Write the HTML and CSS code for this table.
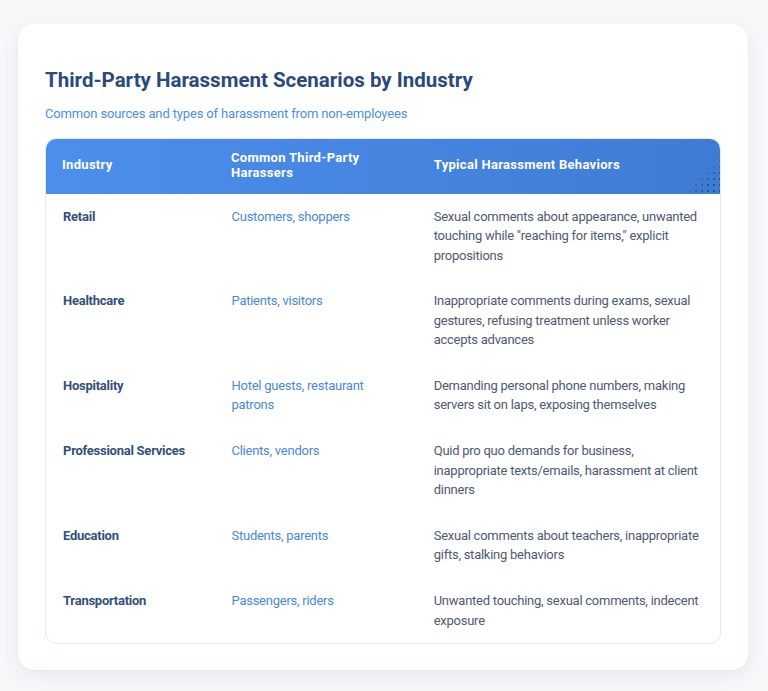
FILE: index.html
```html
<!DOCTYPE html>
<html lang="en">
<head>
<meta charset="utf-8">
<title>Third-Party Harassment Scenarios by Industry</title>
<link rel="stylesheet" href="styles.css">
</head>
<body>
<div class="card">
  <h1 class="title">Third-Party Harassment Scenarios by Industry</h1>
  <p class="subtitle">Common sources and types of harassment from non-employees</p>
  <div class="table">
    <div class="row head">
      <div class="cell">Industry</div>
      <div class="cell">Common Third-Party Harassers</div>
      <div class="cell">Typical Harassment Behaviors</div>
      <span class="dots"></span>
    </div>
    <div class="row">
      <div class="cell ind">Retail</div>
      <div class="cell who">Customers, shoppers</div>
      <div class="cell what">Sexual comments about appearance, unwanted touching while "reaching for items," explicit propositions</div>
    </div>
    <div class="row">
      <div class="cell ind">Healthcare</div>
      <div class="cell who">Patients, visitors</div>
      <div class="cell what">Inappropriate comments during exams, sexual gestures, refusing treatment unless worker accepts advances</div>
    </div>
    <div class="row">
      <div class="cell ind">Hospitality</div>
      <div class="cell who">Hotel guests, restaurant patrons</div>
      <div class="cell what">Demanding personal phone numbers, making servers sit on laps, exposing themselves</div>
    </div>
    <div class="row">
      <div class="cell ind">Professional Services</div>
      <div class="cell who">Clients, vendors</div>
      <div class="cell what">Quid pro quo demands for business, inappropriate texts/emails, harassment at client dinners</div>
    </div>
    <div class="row">
      <div class="cell ind">Education</div>
      <div class="cell who">Students, parents</div>
      <div class="cell what">Sexual comments about teachers, inappropriate gifts, stalking behaviors</div>
    </div>
    <div class="row">
      <div class="cell ind">Transportation</div>
      <div class="cell who">Passengers, riders</div>
      <div class="cell what">Unwanted touching, sexual comments, indecent exposure</div>
    </div>
  </div>
</div>
</body>
</html>
```
FILE: styles.css
```css
* { box-sizing: border-box; }
html, body { margin: 0; padding: 0; }
body {
  background: #f7f8fa;
  font-family: Roboto, "Liberation Sans", sans-serif;
  padding: 24px 20px 22px 18px;
}
.card {
  width: 730px;
  background: #ffffff;
  border-radius: 16px;
  box-shadow: 0 6px 22px rgba(40, 60, 100, 0.08), 0 1px 3px rgba(40, 60, 100, 0.04);
  padding: 44px 27px 26px 27px;
}
.title {
  margin: 0;
  font-size: 20.5px;
  line-height: 24px;
  font-weight: 700;
  color: #2b4a7c;
}
.subtitle {
  margin: 12px 0 14px 0;
  font-size: 13px;
  line-height: 19.5px;
  color: #4a8fe8;
  letter-spacing: -0.15px;
}
.table {
  border: 1px solid #e6ebf3;
  border-radius: 11px;
  overflow: hidden;
  font-size: 13px;
  line-height: 19.5px;
}
.row {
  display: grid;
  grid-template-columns: 25% 30% 45%;
}
.head {
  position: relative;
  background: linear-gradient(90deg, #4b8eec 0%, #4585e0 55%, #3e7bd4 100%);
  color: #ffffff;
  font-weight: 700;
  margin: -1px -1px 0 -1px;
}
.dots {
  position: absolute;
  right: 0;
  bottom: 0;
  width: 34px;
  height: 42px;
  background-image: radial-gradient(circle, rgba(30, 40, 70, 0.55) 0.7px, transparent 1px);
  background-size: 6px 6px;
  -webkit-mask-image: linear-gradient(135deg, transparent 45%, #000 75%);
  mask-image: linear-gradient(135deg, transparent 45%, #000 75%);
  pointer-events: none;
}
.row .cell {
  padding: 13.1px 17px;
  letter-spacing: -0.25px;
}
.head .cell {
  padding: 13.5px 17px;
  line-height: 14.5px;
  align-self: center;
  letter-spacing: 0.3px;
}
.ind {
  font-weight: 700;
  color: #33507b;
}
.who {
  color: #4a88dc;
}
.what {
  color: #4e5a70;
}
```
